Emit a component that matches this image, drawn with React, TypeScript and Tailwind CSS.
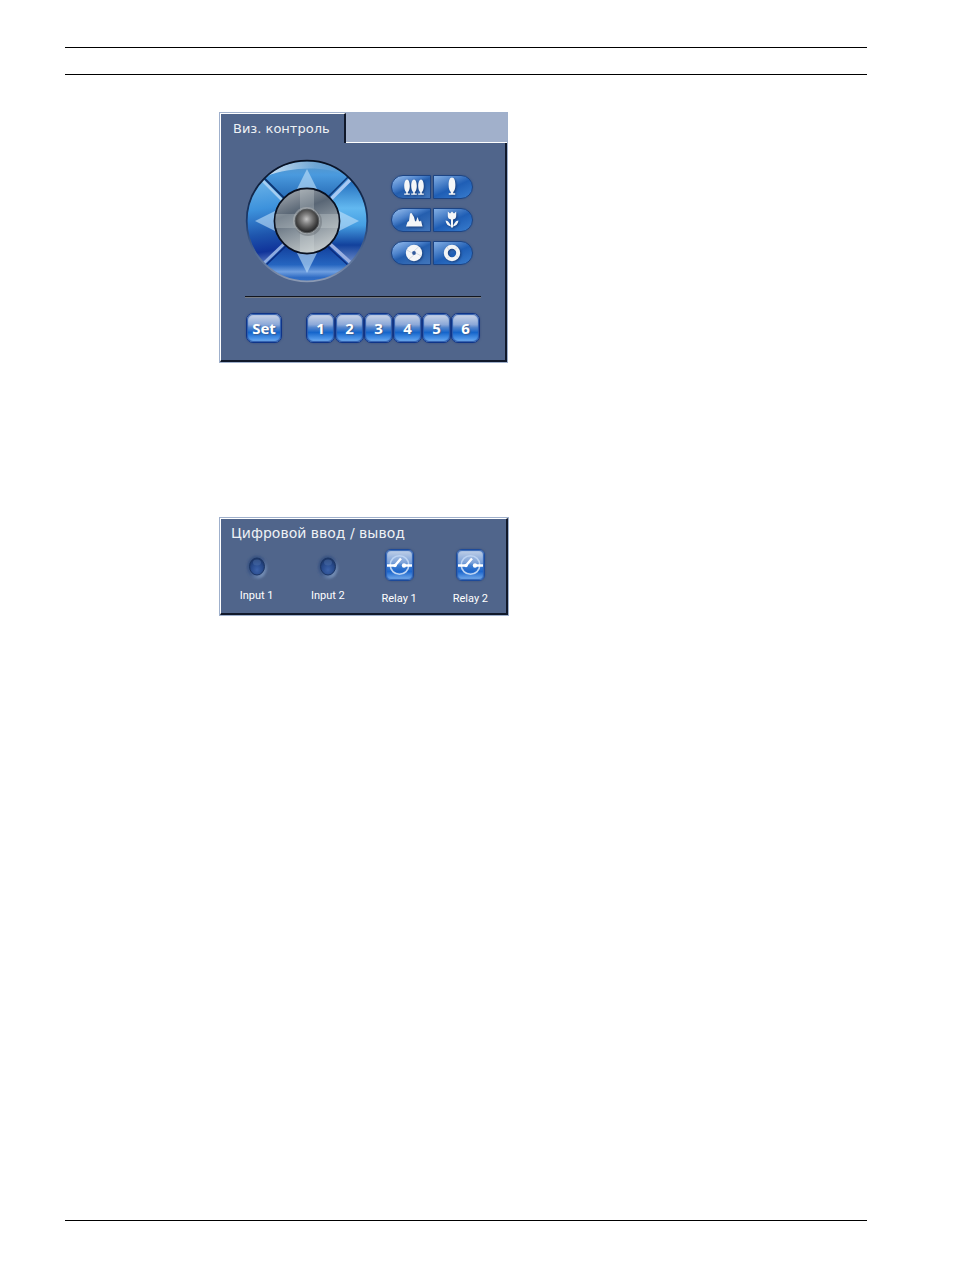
import React from "react";

const PANEL_FONT = "font-['DejaVu_Sans',sans-serif]";

function Dial() {
  return (
    <div className="relative size-[124px]">
      <svg viewBox="0 0 124 124" className="block size-full" aria-hidden="true">
        <defs>
          <linearGradient id="ringTop" x1="0" y1="0" x2="0" y2="1">
            <stop offset="0" stopColor="#5c94c4" />
            <stop offset="0.25" stopColor="#4a9ade" />
            <stop offset="0.65" stopColor="#2569b4" />
            <stop offset="1" stopColor="#123f92" />
          </linearGradient>
          <linearGradient id="ringLeft" x1="0.3" y1="0" x2="0.4" y2="1">
            <stop offset="0" stopColor="#6db4e8" />
            <stop offset="0.35" stopColor="#3d92dc" />
            <stop offset="0.65" stopColor="#1e55ad" />
            <stop offset="0.85" stopColor="#10339a" />
            <stop offset="1" stopColor="#5f7fc4" />
          </linearGradient>
          <linearGradient id="ringRight" x1="0.4" y1="0" x2="0.4" y2="1">
            <stop offset="0" stopColor="#1d66b8" />
            <stop offset="0.35" stopColor="#62b8f0" />
            <stop offset="0.55" stopColor="#459ee2" />
            <stop offset="0.78" stopColor="#12419c" />
            <stop offset="1" stopColor="#7391cc" />
          </linearGradient>
          <linearGradient id="ringBottom" x1="0" y1="0" x2="0" y2="1">
            <stop offset="0" stopColor="#0c2f88" />
            <stop offset="0.35" stopColor="#123f9c" />
            <stop offset="0.62" stopColor="#2565c0" />
            <stop offset="0.72" stopColor="#6f9fe0" />
            <stop offset="0.8" stopColor="#2f6cc4" />
            <stop offset="1" stopColor="#3674c8" />
          </linearGradient>
          <linearGradient id="rim" x1="0" y1="0" x2="0" y2="1">
            <stop offset="0" stopColor="#070f20" />
            <stop offset="0.5" stopColor="#1d3b6c" />
            <stop offset="0.8" stopColor="#566f98" />
            <stop offset="1" stopColor="#8c9ab3" />
          </linearGradient>
          <linearGradient id="hub" x1="0.2" y1="0" x2="0.6" y2="1">
            <stop offset="0" stopColor="#a4aab0" />
            <stop offset="0.35" stopColor="#596675" />
            <stop offset="0.6" stopColor="#848f99" />
            <stop offset="1" stopColor="#c4cacb" />
          </linearGradient>
          <linearGradient id="gloss" x1="0" y1="0" x2="1" y2="0">
            <stop offset="0" stopColor="#fff" stopOpacity="0.7" />
            <stop offset="0.6" stopColor="#fff" stopOpacity="0.15" />
            <stop offset="1" stopColor="#fff" stopOpacity="0" />
          </linearGradient>
          <radialGradient id="ball" cx="0.48" cy="0.42" r="0.55">
            <stop offset="0" stopColor="#c4c4c4" />
            <stop offset="0.35" stopColor="#858585" />
            <stop offset="0.75" stopColor="#484848" />
            <stop offset="1" stopColor="#252628" />
          </radialGradient>
          <clipPath id="hubClip">
            <circle cx="62" cy="62" r="32" />
          </clipPath>
          <clipPath id="ringClip">
            <circle cx="62" cy="62" r="60" />
          </clipPath>
        </defs>
        <g clipPath="url(#ringClip)">
          <path d="M62 62 19 19Q62-18 105 19Z" fill="url(#ringTop)" />
          <path d="M62 62 19 19Q-18 62 19 105Z" fill="url(#ringLeft)" />
          <path d="M62 62 105 19Q142 62 105 105Z" fill="url(#ringRight)" />
          <path d="M62 62 19 105Q62 160 105 105Z" fill="url(#ringBottom)" />
          <path d="M22 17C40-2 84-2 102 17C80 6 45 8 22 17Z" fill="url(#gloss)" />
          <path d="m19 19 23 23" stroke="#0d3673" strokeWidth="2" />
          <path d="m17 21 23 23" stroke="#a5cdf0" strokeWidth="2.5" />
          <path d="m106 20-23 23" stroke="#a8c9f3" strokeWidth="3.5" />
          <path d="m103 18-22 22" stroke="#0c397a" strokeWidth="1.5" />
          <path d="m19 104 22-21" stroke="#8eabe0" strokeWidth="3" />
          <path d="m21 106 22-21" stroke="#0a2c80" strokeWidth="1.5" />
          <path d="m84 84 23 21" stroke="#9aafe0" strokeWidth="3.5" />
          <path d="m82 87 22 20" stroke="#0a2c80" strokeWidth="1.5" />
        </g>
        <circle cx="62" cy="62" r="60.3" fill="none" stroke="url(#rim)" strokeWidth="1.8" />
        <g fill="#c3e2fa" opacity="0.6">
          <path d="M62 10 72 30H52Z" />
          <path d="M62 114 72 94H52Z" />
          <path d="M10 62 30 52V72Z" />
          <path d="M114 62 94 52V72Z" />
        </g>
        <circle cx="62" cy="62" r="32.5" fill="url(#hub)" stroke="#091020" strokeWidth="1.8" />
        <g clipPath="url(#hubClip)" fill="#d9dedf" opacity="0.28">
          <path d="M55 29h14v26h26v14H69v26H55V69H29V55h26z" />
        </g>
        <circle cx="63" cy="63" r="14" fill="#636b72" opacity="0.45" />
        <circle cx="61.500" cy="61.500" r="13.500" fill="#b1b5b7" opacity="0.55" />
        <circle cx="62" cy="62" r="11.800" fill="url(#ball)" stroke="#54585b" strokeWidth="1" />
      </svg>
      <div className="absolute inset-0 grid grid-cols-3 grid-rows-3">
        <button type="button" aria-label="Tilt up" className="col-start-2 row-start-1" />
        <button type="button" aria-label="Pan left" className="col-start-1 row-start-2" />
        <button type="button" aria-label="Centre" className="col-start-2 row-start-2 rounded-full" />
        <button type="button" aria-label="Pan right" className="col-start-3 row-start-2" />
        <button type="button" aria-label="Tilt down" className="col-start-2 row-start-3" />
      </div>
    </div>
  );
}

const tree = "c1.800 0 2.800 3 2.800 6.500 0 3-.8 5.200-2 6v1.500h2v1.200h-5.600v-1.200h2v-1.500c-1.200-.8-2-3-2-6 0-3.500 1-6.500 2.800-6.500z";

const lensIcons: Record<string, React.ReactNode> = {
  wide: (
    <g>
      <path d={"M5 2.500" + tree} />
      <path d={"M12 2.500" + tree} />
      <path d={"M19 2.500" + tree} />
    </g>
  ),
  tele: <path d="M12 .5c2.400 0 3.400 3.500 3.400 7.500 0 3.500-1 6-2.200 7v1.300h2v1.500H8.800v-1.500h2V15c-1.200-1-2.200-3.500-2.200-7C8.600 4 9.600.5 12 .5z" />,
  far: <path d="M4 16.500 5.500 12l1.500-1 1-7.500L9.500 3l2.500 4 1 4 1 .5 1.500-4.500 1.500 4 1 .5 1-1 1.500 6z" />,
  near: (
    <g>
      <path d="M7.800 1.500 10 3.500l2-2 2 2 2.200-2v4.500c0 2-1.200 3.200-3.200 3.500v8h-2v-8C9 9.200 7.800 8 7.800 6z" />
      <path d="M11 16.500C8 16 6 14 5.500 10.500c1.500.2 2.500.8 3.200 1.700C9.800 13.300 10.700 14.700 11 16.500zM13 16.500c3-.5 5-2.500 5.500-6-1.500.2-2.500.8-3.200 1.700-1.100 1.100-2 2.500-2.300 4.300z" />
    </g>
  ),
  close: (
    <g>
      <circle cx="12" cy="10" r="8.200" />
      <path d="m12 8 4.500-4M14 10l5 3M12 12l-5 4M10 10 5 7" stroke="#c6cdd8" strokeWidth="0.7" />
      <circle cx="12" cy="10" r="1.900" fill="#315a9c" />
    </g>
  ),
  open: (
    <g>
      <circle cx="12" cy="10" r="6.200" fill="none" stroke="#f2f4f6" strokeWidth="4" />
      <path d="m9 7-2-3M15 6.500l2-2M16 12.500l2 2M9 13.500l-2 2" stroke="#c6cdd8" strokeWidth="0.7" />
    </g>
  ),
};

function LensButton({ icon, label, side }: { icon: string; label: string; side: "left" | "right" }) {
  const shape =
    side === "left"
      ? "rounded-l-full bg-[linear-gradient(155deg,#9cc2f0_0%,#4c82cb_35%,#245eae_50%,#4276bb_100%)] pl-[6px]"
      : "rounded-r-full bg-[linear-gradient(155deg,#83afe5_0%,#4179c4_35%,#1f5eb5_52%,#397dce_100%)] pr-[2px]";
  return (
    <button
      type="button"
      aria-label={label}
      className={`flex h-6 w-10 items-center justify-center border border-[#1c4484] shadow-[0_0_2px_#3b5481] ${shape}`}
    >
      <svg viewBox="0 0 24 20" className="h-5 w-6 fill-[#f4f6f8] drop-shadow-[1px_1px_1px_#173d7a]" aria-hidden="true">
        {lensIcons[icon]}
      </svg>
    </button>
  );
}

function KeyButton({ label, wide }: { label: string; wide?: boolean }) {
  return (
    <button
      type="button"
      className={`flex h-[30px] items-center justify-center rounded-[7px] border border-[#0f3488] bg-[linear-gradient(#ced7e9_0%,#8ba8d8_38%,#5586cd_48%,#1565cb_66%,#4d95e8_88%,#7bb5f3_100%)] font-['Noto_Sans',sans-serif] text-[15px] leading-[20px] font-bold text-white shadow-[inset_0_0_1px_1px_#2f5dab,0_0_2px_#34497a] [text-shadow:1px_1px_1px_#3b6095] ${wide ? "w-9" : "w-[29px]"}`}
    >
      {label}
    </button>
  );
}

function Led({ label }: { label: string }) {
  return (
    <div className="flex flex-col items-center">
      <svg viewBox="0 0 24 28" className="h-7 w-6" aria-hidden="true">
        <defs>
          <radialGradient id="led" cx="0.5" cy="0.7" r="0.65">
            <stop offset="0" stopColor="#3c62a9" />
            <stop offset="0.6" stopColor="#284a8b" />
            <stop offset="1" stopColor="#1b3566" />
          </radialGradient>
          <linearGradient id="bezel" x1="0" y1="0" x2="1" y2="1">
            <stop offset="0.1" stopColor="#354f7e" />
            <stop offset="0.5" stopColor="#3f5988" />
            <stop offset="0.95" stopColor="#8da6ca" />
          </linearGradient>
          <filter id="soft">
            <feGaussianBlur stdDeviation="0.9" />
          </filter>
        </defs>
        <ellipse cx="12" cy="14" rx="10" ry="11.500" fill="url(#bezel)" filter="url(#soft)" />
        <ellipse cx="12" cy="13.500" rx="7.500" ry="8.500" fill="url(#led)" stroke="#1c3564" strokeWidth="1" />
        <ellipse cx="12" cy="9.500" rx="4" ry="3" fill="#4b6da6" opacity="0.5" />
      </svg>
      <span className="mt-2 text-[11px] leading-[14px]">{label}</span>
    </div>
  );
}

function Relay({ label }: { label: string }) {
  return (
    <button type="button" className="flex flex-col items-center">
      <span className="flex h-8 w-[29px] items-center justify-center rounded-[6px] border border-[#1c4a9a] bg-[linear-gradient(#c3d2e8_0%,#7da2d9_42%,#3f7dd0_52%,#1d66cc_72%,#7cb1ee_100%)] shadow-[inset_0_0_1px_1px_#2f62b4,0_0_2px_#354b74]">
        <svg viewBox="0 0 27 30" className="h-[30px] w-[27px] shrink-0" fill="none" aria-hidden="true">
          <circle cx="13.500" cy="15" r="9.300" stroke="#bcd3f2" strokeWidth="1.600" />
          <path d="M1 15.500h8l6-7M18 15.500h8" stroke="#fff" strokeWidth="2.400" />
          <circle cx="9" cy="15.500" r="1.800" fill="#fff" />
          <circle cx="18" cy="15.500" r="2.200" fill="#fff" />
        </svg>
      </span>
      <span className="mt-[11px] text-[11px] leading-[14px]">{label}</span>
    </button>
  );
}

export default function App() {
  return (
    <div className="flex min-h-screen flex-col bg-white pt-[47px] pr-[87px] pb-[52px] pl-[65px]">
      <header className="h-7 border-y border-black" />
      <main className="flex grow flex-col items-start gap-[154px] pt-[37px] pl-[154px]">
        <section className={`w-[289px] border border-[#9fb0cc] bg-[#a1b0cb] text-white ${PANEL_FONT}`}>
          <div className="flex h-[30px]" role="tablist">
            <button
              type="button"
              role="tab"
              aria-selected="true"
              className="w-[126px] border-t border-r-2 border-l border-t-white border-r-[#10182a] border-l-white bg-[#50658b] pl-[12px] text-left text-[13px] leading-[30px] whitespace-nowrap text-[#eef1f5]"
            >
              Виз. контроль
            </button>
            <div className="grow border-b border-white" />
          </div>
          <div className="border-r-2 border-b-2 border-l border-r-[#10182a] border-b-[#10182a] border-l-white bg-[#50658b] px-[24px] pt-[16px] pb-[17px]">
            <div className="flex items-center justify-between pr-[8px]">
              <Dial />
              <div className="mb-[2px] grid grid-cols-2 gap-x-[2px] gap-y-[9px]">
                <LensButton icon="wide" label="Zoom out" side="left" />
                <LensButton icon="tele" label="Zoom in" side="right" />
                <LensButton icon="far" label="Focus far" side="left" />
                <LensButton icon="near" label="Focus near" side="right" />
                <LensButton icon="close" label="Iris close" side="left" />
                <LensButton icon="open" label="Iris open" side="right" />
              </div>
            </div>
            <hr className="mt-[13px] border-t border-b border-t-[#12161f] border-b-[#777b82]" />
            <div className="mt-[15px] flex justify-between px-[1px]">
              <KeyButton label="Set" wide />
              <div className="flex">
                {["1", "2", "3", "4", "5", "6"].map((n) => (
                  <KeyButton key={n} label={n} />
                ))}
              </div>
            </div>
          </div>
        </section>

        <section className={`w-[290px] border border-[#9fb0cc] text-white ${PANEL_FONT}`}>
          <div className="border-t border-r-2 border-b-2 border-l border-t-white border-r-[#10182a] border-b-[#10182a] border-l-white bg-[#50658b] pt-[4px] pb-[7px]">
            <h2 className="pl-[10px] text-[14px] leading-[20px] text-[#eef1f5]">Цифровой ввод / вывод</h2>
            <div className="grid grid-cols-4 items-center pt-[6px] font-['Roboto',sans-serif]">
              <Led label="Input 1" />
              <Led label="Input 2" />
              <Relay label="Relay 1" />
              <Relay label="Relay 2" />
            </div>
          </div>
        </section>
      </main>
      <footer className="border-t border-black" />
    </div>
  );
}
